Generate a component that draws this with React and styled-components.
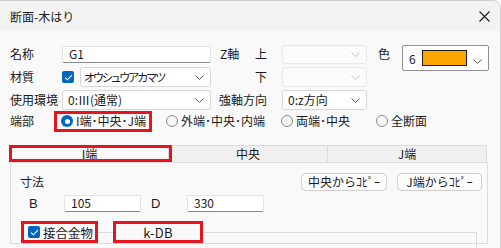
import React from "react";
import styled, { createGlobalStyle, css } from "styled-components";

const RED = "#e4151f";
const BLUE = "#0067c0";

const GlobalStyle = createGlobalStyle`
  html, body { margin: 0; padding: 0; background: #ffffff; }
  body {
    font-family: "Noto Sans CJK JP", "Noto Sans", sans-serif;
    font-size: 12px;
    color: #1a1a1a;
  }
  * { box-sizing: border-box; }
`;

// red annotation frame drawn over a part of the dialog
const marked = css`
  position: relative;
  &::after {
    content: "";
    position: absolute;
    inset: ${(p) => p.$mark};
    border: 3px solid ${RED};
    pointer-events: none;
  }
`;

const Window = styled.div`
  width: 501px;
  height: 248px;
  overflow: hidden;
  background: #f9f9f9;
  border-top: 1px solid #cfcfcf;
  border-right: 1px solid #cfcfcf;
  border-top-right-radius: 8px;
  display: flex;
  flex-direction: column;
`;

const TitleBar = styled.div`
  height: 30px;
  flex: none;
  background: #f3f3f3;
  display: flex;
  align-items: center;
  justify-content: space-between;
  padding: 0 10px 0 10px;
  font-size: 12px;
`;

const Body = styled.div`
  padding: 13px 0 0 10px;
  display: flex;
  flex-direction: column;
`;

const FormGrid = styled.div`
  display: grid;
  grid-template-columns: 52px 149px 8px 36px 27px 85px 11px 24px 87px;
  grid-template-rows: 20px 20px 20px;
  row-gap: 3px;
`;

const Label = styled.div`
  grid-column: ${(p) => p.$col};
  grid-row: ${(p) => p.$row};
  align-self: center;
  white-space: nowrap;
  line-height: 14px;
  padding-left: ${(p) => p.$indent || 0}px;
`;

const TextBox = styled.div`
  grid-column: ${(p) => p.$col || "auto"};
  grid-row: ${(p) => p.$row || "auto"};
  align-self: center;
  width: ${(p) => (p.$w ? p.$w + "px" : "auto")};
  height: 17px;
  background: #ffffff;
  border: 1px solid #e3e3e3;
  border-bottom-color: #8a8a8a;
  border-radius: 2px;
  padding: 0 6px;
  display: flex;
  align-items: center;
  font-size: 12px;
  line-height: 14px;
`;

const ComboBox = styled.div`
  grid-column: ${(p) => p.$col || "auto"};
  grid-row: ${(p) => p.$row || "auto"};
  flex: ${(p) => (p.$grow ? 1 : "none")};
  min-width: 0;
  overflow: hidden;
  height: ${(p) => p.$h || 20}px;
  align-self: center;
  background: ${(p) => (p.$disabled ? "#fbfbfb" : "#ffffff")};
  border: 1px solid ${(p) => (p.$disabled ? "#e9e9e9" : "#d6d6d6")};
  border-radius: 3px;
  display: flex;
  align-items: center;
  justify-content: space-between;
  padding: 0 6px 0 5px;
  font-size: 12px;
  line-height: 14px;
  white-space: nowrap;
`;

const Kana = styled.span`
  font-size: 11.5px;
  font-feature-settings: "palt";
  letter-spacing: -1.5px;
  margin-left: -2px;
`;

const ColorCombo = styled.div`
  grid-column: 9;
  grid-row: 1 / span 2;
  align-self: start;
  margin-top: 1px;
  height: 26px;
  background: #ffffff;
  border: 1px solid #8f8f8f;
  border-radius: 2px;
  display: flex;
  align-items: center;
  padding: 0 6px 0 6px;
  gap: 6px;
`;

const Swatch = styled.div`
  width: 47px;
  height: 16px;
  background: #ffa500;
  border: 1px solid #1a1a1a;
`;

const Cell = styled.div`
  grid-column: ${(p) => p.$col};
  grid-row: ${(p) => p.$row};
  display: flex;
  align-items: center;
  gap: 6px;
  min-width: 0;
`;

const Check = styled.span`
  width: 12px;
  height: 12px;
  flex: none;
  border-radius: 2px;
  background: ${BLUE};
  display: inline-flex;
  align-items: center;
  justify-content: center;
`;

const RadioRow = styled.div`
  display: flex;
  align-items: center;
  height: 20px;
  margin-top: 1px;
`;

const RadioLabel = styled.div`
  width: 52px;
  line-height: 14px;
`;

const RadioItem = styled.div`
  width: ${(p) => (p.$w ? p.$w + "px" : "auto")};
  height: 20px;
  display: flex;
  align-items: center;
  gap: 3px;
  white-space: nowrap;
  line-height: 14px;
  ${(p) => p.$mark && marked}
`;

const Dot = styled.span`
  width: 12px;
  height: 12px;
  flex: none;
  border-radius: 50%;
  margin-left: -1px;
  ${(p) =>
    p.$on
      ? css`
          background: ${BLUE};
          display: inline-flex;
          align-items: center;
          justify-content: center;
          &::before {
            content: "";
            width: 5px;
            height: 5px;
            border-radius: 50%;
            background: #ffffff;
          }
        `
      : css`
          border: 1px solid #8a8a8a;
          background: #f6f6f6;
        `}
`;

const Tabs = styled.div`
  margin-top: 14px;
  width: 477px;
  display: grid;
  grid-template-columns: repeat(3, 1fr);
  height: 17px;
`;

const Tab = styled.div`
  display: flex;
  align-items: center;
  justify-content: center;
  background: ${(p) => (p.$active ? "#f9f9f9" : "#f0f0f0")};
  border: 1px solid #dcdcdc;
  border-bottom: none;
  margin-left: ${(p) => (p.$first ? 0 : -1)}px;
  font-size: 12px;
  line-height: 14px;
  ${(p) => p.$mark && marked}
`;

const Panel = styled.div`
  width: 478px;
  flex: 1;
  border: 1px solid #dcdcdc;
  background: #f9f9f9;
  padding: 9px 5px 0 9px;
  display: flex;
  flex-direction: column;
`;

const PanelHead = styled.div`
  display: flex;
  align-items: center;
  justify-content: space-between;
  height: 19px;
`;

const Buttons = styled.div`
  display: flex;
  gap: 10px;
`;

const Button = styled.div`
  width: ${(p) => p.$w}px;
  height: 18px;
  border: 1px solid #cfcfcf;
  border-radius: 4px;
  background: #fdfdfd;
  display: flex;
  align-items: center;
  justify-content: center;
  font-size: 12px;
  line-height: 14px;
  white-space: nowrap;
`;

const SizeRow = styled.div`
  display: flex;
  align-items: center;
  margin-top: 3px;
  height: 18px;
`;

const SizeLabel = styled.div`
  width: ${(p) => p.$w}px;
  padding-left: ${(p) => p.$indent || 0}px;
  font-family: "Liberation Sans", "Noto Sans", sans-serif;
  font-size: 13px;
`;

const GroupHead = styled.div`
  display: flex;
  align-items: stretch;
  height: 22px;
  margin-top: 9px;
  margin-left: 1px;
`;

const CheckLabel = styled.div`
  width: 77px;
  display: flex;
  align-items: center;
  gap: 3px;
  padding-left: 7px;
  font-size: 12.5px;
  ${marked}
`;

const Rule = styled.div`
  flex: ${(p) => (p.$grow ? 1 : "none")};
  width: ${(p) => p.$w || 0}px;
  margin-top: 11px;
  height: 30px;
  border-top: 1px solid #dcdcdc;
  border-right: ${(p) => (p.$corner ? "1px solid #dcdcdc" : "none")};
  margin-right: ${(p) => (p.$corner ? 5 : 0)}px;
`;

const StaticBox = styled.div`
  width: 90px;
  border: 3px solid ${RED};
  display: flex;
  align-items: center;
  justify-content: center;
  font-size: 13px;
  letter-spacing: 0.3px;
`;

const Chevron = ({ color = "#5f5f5f" }) => (
  <svg width="9" height="5" viewBox="0 0 9 5" style={{ flex: "none" }}>
    <polyline points="0.5,0.5 4.5,4.5 8.5,0.5" fill="none" stroke={color} strokeWidth="1" />
  </svg>
);

const CloseIcon = () => (
  <svg width="11" height="11" viewBox="0 0 11 11">
    <path d="M0.5 0.5 L10.5 10.5 M10.5 0.5 L0.5 10.5" stroke="#1a1a1a" strokeWidth="1.1" />
  </svg>
);

const Tick = () => (
  <svg width="9" height="7" viewBox="0 0 9 7">
    <polyline points="1,3.6 3.4,5.8 8,1.2" fill="none" stroke="#ffffff" strokeWidth="1.1" />
  </svg>
);

export default function App() {
  return (
    <>
      <GlobalStyle />
      <Window>
        <TitleBar>
          <span>断面-木はり</span>
          <CloseIcon />
        </TitleBar>
        <Body>
          <FormGrid>
            <Label $col={1} $row={1}>名称</Label>
            <TextBox $col={2} $row={1}>G1</TextBox>
            <Label $col={4} $row={1} $indent={1}>Z軸</Label>
            <Label $col={5} $row={1}>上</Label>
            <ComboBox $col={6} $row={1} $h={19} $disabled>
              <span />
              <Chevron color="#c4c4c4" />
            </ComboBox>
            <Label $col={8} $row={1}>色</Label>
            <ColorCombo>
              <span>6</span>
              <Swatch />
              <span style={{ marginLeft: "auto" }}>
                <Chevron />
              </span>
            </ColorCombo>

            <Label $col={1} $row={2}>材質</Label>
            <Cell $col={2} $row={2}>
              <Check>
                <Tick />
              </Check>
              <ComboBox $grow>
                <Kana>オウシュウアカマツ</Kana>
                <Chevron />
              </ComboBox>
            </Cell>
            <Label $col={5} $row={2}>下</Label>
            <ComboBox $col={6} $row={2} $disabled>
              <span />
              <Chevron color="#c4c4c4" />
            </ComboBox>

            <Label $col={1} $row={3}>使用環境</Label>
            <ComboBox $col={2} $row={3}>
              <span>0:Ⅲ(通常)</span>
              <Chevron />
            </ComboBox>
            <Label $col="4 / span 2" $row={3}>強軸方向</Label>
            <ComboBox $col={6} $row={3}>
              <span>0:z方向</span>
              <Chevron />
            </ComboBox>
          </FormGrid>

          <RadioRow>
            <RadioLabel>端部</RadioLabel>
            <RadioItem $w={105} $mark="0 15px -1px -8px">
              <Dot $on />
              I端･中央･J端
            </RadioItem>
            <RadioItem $w={115}>
              <Dot />
              外端･中央･内端
            </RadioItem>
            <RadioItem $w={95}>
              <Dot />
              両端･中央
            </RadioItem>
            <RadioItem>
              <Dot />
              全断面
            </RadioItem>
          </RadioRow>

          <Tabs>
            <Tab $first $active $mark="-1px -4px 0 -2px">I端</Tab>
            <Tab>中央</Tab>
            <Tab>J端</Tab>
          </Tabs>
          <Panel>
            <PanelHead>
              <span>寸法</span>
              <Buttons>
                <Button $w={86}>中央からｺﾋﾟｰ</Button>
                <Button $w={85}>J端からｺﾋﾟｰ</Button>
              </Buttons>
            </PanelHead>
            <SizeRow>
              <SizeLabel $w={44} $indent={9}>B</SizeLabel>
              <TextBox $w={77}>105</TextBox>
              <SizeLabel $w={46} $indent={10}>D</SizeLabel>
              <TextBox $w={77}>330</TextBox>
            </SizeRow>
            <GroupHead>
              <CheckLabel $mark="0">
                <Check>
                  <Tick />
                </Check>
                接合金物
              </CheckLabel>
              <Rule $w={15} />
              <StaticBox>k-DB</StaticBox>
              <Rule $grow $corner />
            </GroupHead>
          </Panel>
        </Body>
      </Window>
    </>
  );
}
